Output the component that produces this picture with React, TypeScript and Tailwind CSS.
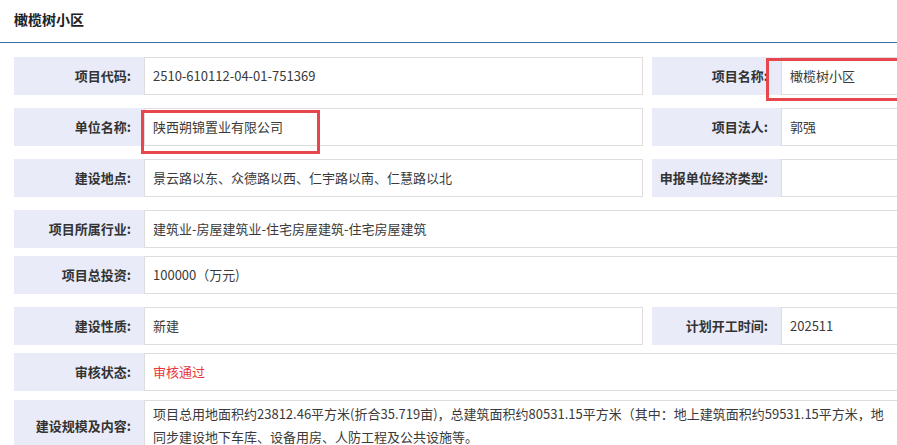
const font = {
	fontFamily: '"Noto Sans CJK SC", "Noto Sans", sans-serif',
};

type Cell = { label: string; value?: string; valueClass?: string };

function Label({ text, className }: { text: string; className?: string }) {
	return (
		<div
			className={`flex h-full shrink-0 items-center justify-end bg-[#e9ecf8] pr-[13px] font-bold text-[#333] text-[13px] ${className ?? ""}`}
		>
			{text}
		</div>
	);
}

function Value({ text, className }: { text?: string; className?: string }) {
	return (
		<div
			className={`flex h-full items-center whitespace-nowrap border border-[#dedede] bg-white pl-2 text-[#3a3a3a] text-[13px] ${className ?? ""}`}
		>
			{text}
		</div>
	);
}

function PairRow({ left, right, top }: { left: Cell; right: Cell; top: string }) {
	return (
		<div className={`flex h-[38px] ${top}`}>
			<Label text={left.label} className="w-[130px]" />
			<Value text={left.value} className={`w-[499px] ${left.valueClass ?? ""}`} />
			<div className="w-[9px] shrink-0" />
			<Label text={right.label} className="w-[129px]" />
			<Value text={right.value} className="w-[220px]" />
		</div>
	);
}

function WideRow({ cell, top }: { cell: Cell; top: string }) {
	return (
		<div className={`flex h-[38px] ${top}`}>
			<Label text={cell.label} className="w-[130px]" />
			<Value text={cell.value} className={`flex-1 ${cell.valueClass ?? ""}`} />
		</div>
	);
}

export default function App() {
	return (
		<div className="relative h-[445px] w-[897px] overflow-hidden bg-white" style={font}>
			<div className="flex h-[43px] items-center border-[#3f6fa8] border-b pb-[3px] pl-[14px] font-bold text-[#222] text-[14px]">
				橄榄树小区
			</div>

			<div className="w-[1030px] pl-[14px]">
				<PairRow
					top="mt-[14px]"
					left={{ label: "项目代码:", value: "2510-610112-04-01-751369" }}
					right={{ label: "项目名称:", value: "橄榄树小区" }}
				/>
				<PairRow
					top="mt-[13px]"
					left={{ label: "单位名称:", value: "陕西朔锦置业有限公司" }}
					right={{ label: "项目法人:", value: "郭强" }}
				/>
				<PairRow
					top="mt-[13px]"
					left={{ label: "建设地点:", value: "景云路以东、众德路以西、仁宇路以南、仁慧路以北" }}
					right={{ label: "申报单位经济类型:" }}
				/>
				<WideRow
					top="mt-[13px]"
					cell={{ label: "项目所属行业:", value: "建筑业-房屋建筑业-住宅房屋建筑-住宅房屋建筑" }}
				/>
				<WideRow top="mt-[8px]" cell={{ label: "项目总投资:", value: "100000（万元)" }} />
				<PairRow
					top="mt-[13px]"
					left={{ label: "建设性质:", value: "新建" }}
					right={{ label: "计划开工时间:", value: "202511" }}
				/>
				<WideRow
					top="mt-[8px]"
					cell={{ label: "审核状态:", value: "审核通过", valueClass: "text-[#e8383d]" }}
				/>
				<div className="mt-[9px] flex h-[52px]">
					<Label text="建设规模及内容:" className="w-[130px]" />
					<div className="flex-1 whitespace-nowrap border border-[#dedede] bg-white pt-[1px] pl-2 text-[#3a3a3a] text-[13px] leading-[23px]">
						<div>
							项目总用地面积约23812.46平方米(折合35.719亩)，总建筑面积约80531.15平方米（其中：地上建筑面积约59531.15平方米，地
						</div>
						<div>同步建设地下车库、设备用房、人防工程及公共设施等。</div>
					</div>
				</div>
			</div>

			<div className="absolute top-[110px] left-[141px] h-[44px] w-[179px] border-[3px] border-[#e6464c]" />
			<div className="absolute top-[58px] left-[766px] h-[43px] w-[160px] border-[3px] border-[#e6464c]" />
		</div>
	);
}
